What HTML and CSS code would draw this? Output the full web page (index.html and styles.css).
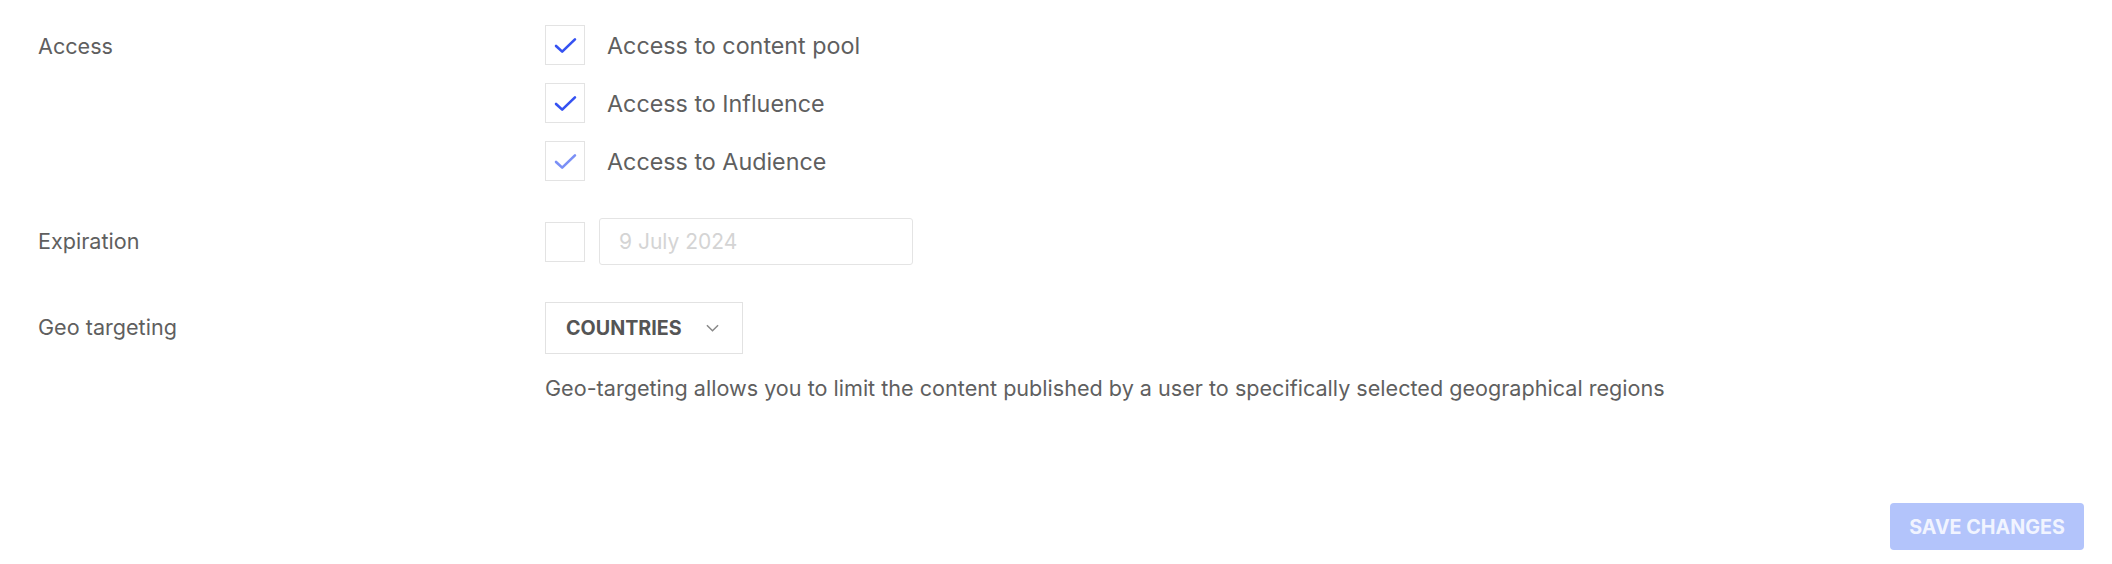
FILE: index.html
```html
<!DOCTYPE html>
<html lang="en">
<head>
    <meta charset="UTF-8">
    <meta name="viewport" content="width=device-width, initial-scale=1.0">
    <title>User permissions</title>
    <link rel="stylesheet" href="styles.css">
</head>
<body>

    <div class="settings">
        <div class="field">
            <div class="field-label access-label">Access</div>
            <div class="field-body options">
                <label class="option">
                    <span class="box checked">
                        <svg viewBox="0 0 24 18" width="23" height="17"><path d="M2 9.5l6.5 6L22 2.5" /></svg>
                    </span>
                    Access to content pool
                </label>
                <label class="option">
                    <span class="box checked">
                        <svg viewBox="0 0 24 18" width="23" height="17"><path d="M2 9.5l6.5 6L22 2.5" /></svg>
                    </span>
                    Access to Influence
                </label>
                <label class="option">
                    <span class="box checked faded">
                        <svg viewBox="0 0 24 18" width="23" height="17"><path d="M2 9.5l6.5 6L22 2.5" /></svg>
                    </span>
                    Access to Audience
                </label>
            </div>
        </div>

        <div class="field">
            <div class="field-label expiry-label">Expiration</div>
            <div class="field-body expiry">
                <span class="box"></span>
                <input type="text" class="date-input" placeholder="9 July 2024" disabled>
            </div>
        </div>

        <div class="field">
            <div class="field-label geo-label">Geo targeting</div>
            <div class="field-body">
                <button class="select-btn">
                    COUNTRIES
                    <svg viewBox="0 0 14 8" width="13" height="8"><path d="M1 1l6 6 6-6" /></svg>
                </button>
                <p class="hint">Geo-targeting allows you to limit the content published by a user to specifically selected geographical regions</p>
            </div>
        </div>
    </div>

    <div class="footer">
        <button class="save-btn" disabled>SAVE CHANGES</button>
    </div>

</body>
</html>
```

FILE: styles.css
```css
body {
    margin: 0;
    font-family: Inter, "Noto Sans", sans-serif;
    color: #5f5f5f;
    background: #fff;
}
.settings {
    padding: 25px 28px 0 38px;
}
.field {
    display: grid;
    grid-template-columns: 507px 1fr;
    margin-bottom: 37px;
}
.field-label {
    font-size: 21.6px;
}
.access-label {
    line-height: 43px;
}
.expiry-label {
    line-height: 47px;
}
.geo-label {
    line-height: 50px;
}
.options {
    display: flex;
    flex-direction: column;
    gap: 18px;
}
.option {
    display: flex;
    align-items: center;
    gap: 22px;
    font-size: 23.3px;
    cursor: pointer;
}
.box {
    box-sizing: border-box;
    width: 40px;
    height: 40px;
    border: 1px solid #e3e3e3;
    display: flex;
    align-items: center;
    justify-content: center;
    flex-shrink: 0;
}
.box svg {
    fill: none;
    stroke: #3552f2;
    stroke-width: 2.8;
    stroke-linecap: round;
    stroke-linejoin: round;
    margin-top: 1px;
}
.box.faded svg {
    stroke: #7b90f6;
}
.expiry {
    display: flex;
    align-items: center;
    gap: 14px;
}
.date-input {
    box-sizing: border-box;
    width: 314px;
    height: 47px;
    border: 1px solid #e4e4e4;
    border-radius: 3px;
    padding: 0 19px;
    font-family: inherit;
    font-size: 21px;
    background: #fff;
}
.date-input::placeholder {
    color: #d4d4d4;
}
.select-btn {
    box-sizing: border-box;
    height: 52px;
    display: inline-flex;
    align-items: center;
    gap: 24px;
    padding: 0 23px 0 20px;
    border: 1px solid #e2e2e2;
    background: #fff;
    font-family: inherit;
    font-size: 19.7px;
    font-weight: 700;
    color: #555;
    cursor: pointer;
}
.select-btn svg {
    fill: none;
    stroke: #888;
    stroke-width: 1.6;
}
.hint {
    margin: 21px 0 0;
    font-size: 21.6px;
}
.footer {
    display: flex;
    justify-content: flex-end;
    padding: 0 28px 0 0;
    margin-top: 102px;
}
.save-btn {
    width: 194px;
    height: 47px;
    border: none;
    border-radius: 4px;
    background: #b3c4fb;
    color: #f1f4ff;
    font-family: inherit;
    font-size: 19.7px;
    font-weight: 700;
}
```
